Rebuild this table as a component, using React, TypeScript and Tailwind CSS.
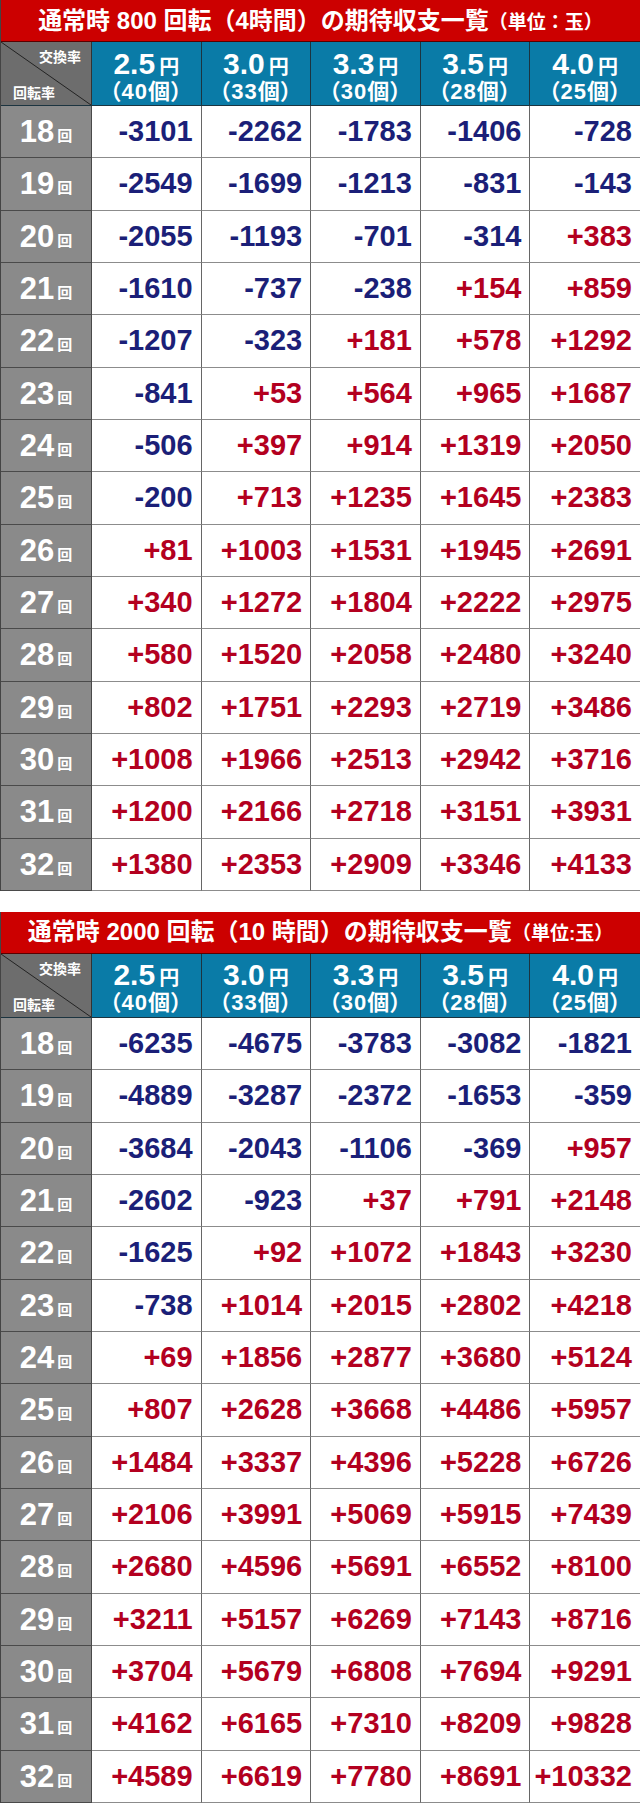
const rates = [
  { yen: '2.5', count: '40' },
  { yen: '3.0', count: '33' },
  { yen: '3.3', count: '30' },
  { yen: '3.5', count: '28' },
  { yen: '4.0', count: '25' },
]

const table1: string[][] = [
  ['-3101', '-2262', '-1783', '-1406', '-728'],
  ['-2549', '-1699', '-1213', '-831', '-143'],
  ['-2055', '-1193', '-701', '-314', '+383'],
  ['-1610', '-737', '-238', '+154', '+859'],
  ['-1207', '-323', '+181', '+578', '+1292'],
  ['-841', '+53', '+564', '+965', '+1687'],
  ['-506', '+397', '+914', '+1319', '+2050'],
  ['-200', '+713', '+1235', '+1645', '+2383'],
  ['+81', '+1003', '+1531', '+1945', '+2691'],
  ['+340', '+1272', '+1804', '+2222', '+2975'],
  ['+580', '+1520', '+2058', '+2480', '+3240'],
  ['+802', '+1751', '+2293', '+2719', '+3486'],
  ['+1008', '+1966', '+2513', '+2942', '+3716'],
  ['+1200', '+2166', '+2718', '+3151', '+3931'],
  ['+1380', '+2353', '+2909', '+3346', '+4133'],
]

const table2: string[][] = [
  ['-6235', '-4675', '-3783', '-3082', '-1821'],
  ['-4889', '-3287', '-2372', '-1653', '-359'],
  ['-3684', '-2043', '-1106', '-369', '+957'],
  ['-2602', '-923', '+37', '+791', '+2148'],
  ['-1625', '+92', '+1072', '+1843', '+3230'],
  ['-738', '+1014', '+2015', '+2802', '+4218'],
  ['+69', '+1856', '+2877', '+3680', '+5124'],
  ['+807', '+2628', '+3668', '+4486', '+5957'],
  ['+1484', '+3337', '+4396', '+5228', '+6726'],
  ['+2106', '+3991', '+5069', '+5915', '+7439'],
  ['+2680', '+4596', '+5691', '+6552', '+8100'],
  ['+3211', '+5157', '+6269', '+7143', '+8716'],
  ['+3704', '+5679', '+6808', '+7694', '+9291'],
  ['+4162', '+6165', '+7310', '+8209', '+9828'],
  ['+4589', '+6619', '+7780', '+8691', '+10332'],
]

function Title({ main, unit }: { main: string; unit: string }) {
  return (
    <div className="h-[42px] bg-[#cc0000] border-b border-[#5a0000] flex items-center justify-center text-white font-bold">
      <span className="text-[24px] leading-none">{main}</span>
      <span className="text-[19px] leading-none mt-[3px]">{unit}</span>
    </div>
  )
}

function HeaderRow() {
  return (
    <div className="grid grid-cols-[91px_repeat(5,1fr)] h-[64px] border-b border-[#1c3440]">
      <div className="relative bg-[#6d6d6d] border-r border-[#333] text-white text-[14px] font-bold leading-none">
        <svg className="absolute inset-0 w-full h-full" viewBox="0 0 91 64" preserveAspectRatio="none">
          <line x1="0" y1="0" x2="91" y2="64" stroke="#222" strokeWidth="1" />
        </svg>
        <span className="absolute right-[10px] top-[8px]">交換率</span>
        <span className="absolute left-[12px] bottom-[5px]">回転率</span>
      </div>
      {rates.map((r) => (
        <div
          key={r.yen}
          className="bg-[#0a7ba7] border-r border-[#1c3440] last:border-r-0 flex flex-col items-center justify-center pt-[4px] text-white font-bold"
        >
          <div className="leading-none flex items-end">
            <span className="text-[30px]">{r.yen}</span>
            <span className="text-[20px] ml-[4px] mb-[2px]">円</span>
          </div>
          <div className="text-[22px] leading-none mt-[2px] tracking-[1px] [font-feature-settings:'palt']">（{r.count}個）</div>
        </div>
      ))}
    </div>
  )
}

function Table({ main, unit, data }: { main: string; unit: string; data: string[][] }) {
  return (
    <div className="w-[640px] border-l border-[#444]">
      <Title main={main} unit={unit} />
      <HeaderRow />
      {data.map((row, i) => (
        <div key={i} className="grid grid-cols-[91px_repeat(5,1fr)] h-[52.33px]">
          <div className="bg-[#8a8a8a] border-r border-b border-[#4a4a4a] flex items-center justify-center text-white font-bold">
            <span className="text-[31px] leading-none">{18 + i}</span>
            <span className="text-[15px] leading-none ml-[3px] mt-[8px]">回</span>
          </div>
          {row.map((v, j) => (
            <div
              key={j}
              className={
                'bg-white border-r border-b border-r-[#666] border-b-[#8c8c8c] last:border-r-0 flex items-center justify-end pr-[8px] text-[29px] font-bold leading-none ' +
                (v.startsWith('-') ? 'text-[#1b1f78]' : 'text-[#b3001f]')
              }
            >
              {v}
            </div>
          ))}
        </div>
      ))}
    </div>
  )
}

export default function App() {
  return (
    <div className="w-[640px] bg-white pb-[11px] font-['Liberation_Sans','Noto_Sans_CJK_JP',sans-serif]">
      <Table main="通常時 800 回転（4時間）の期待収支一覧" unit="（単位：玉）" data={table1} />
      <div className="h-[21px]" />
      <Table main="通常時 2000 回転（10 時間）の期待収支一覧" unit="（単位:玉）" data={table2} />
    </div>
  )
}
